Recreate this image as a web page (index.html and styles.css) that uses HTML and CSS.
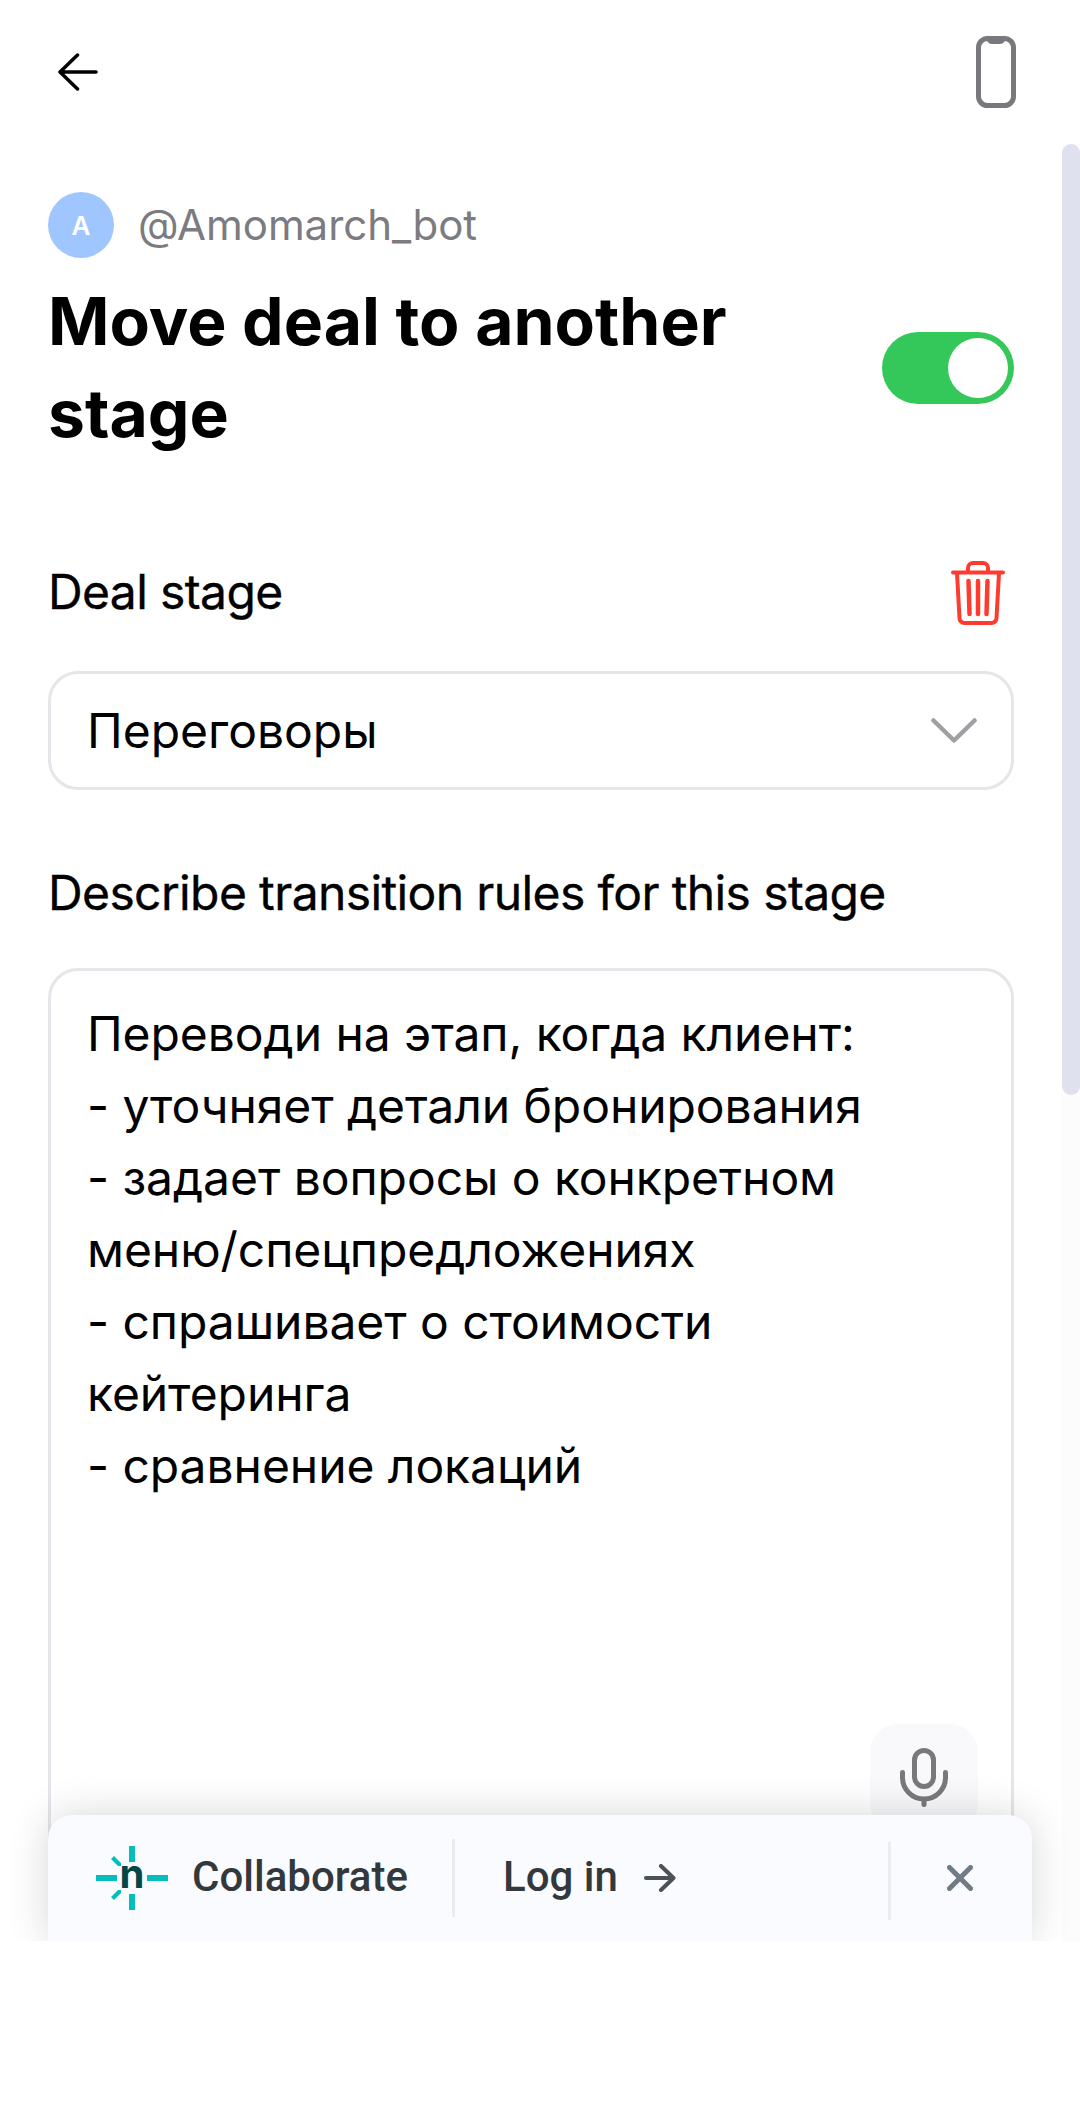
FILE: index.html
```html
<!DOCTYPE html>
<html>
<head>
<meta charset="utf-8">
<title>Move deal to another stage</title>
<link rel="stylesheet" href="styles.css">
</head>
<body>

<div class="screen">

  <div class="scroll-track"><div class="scroll-thumb"></div></div>

  <div class="content">

    <!-- Top bar -->
    <div class="top-bar">
      <svg class="back-icon" width="40" height="38" viewBox="0 0 40 38" fill="none" stroke="#000" stroke-width="3.5" stroke-linecap="round" stroke-linejoin="round">
        <path d="M38 19H3M19.500 2L2 19l17.500 17"/>
      </svg>
      <svg class="phone-icon" width="40" height="72" viewBox="0 0 40 72" fill="none">
        <rect x="2.500" y="2.500" width="35" height="67" rx="9" stroke="#78787d" stroke-width="5"/>
        <path d="M9 3c3 2 3 5 7 5h8c4 0 4-3 7-5z" fill="#78787d"/>
      </svg>
    </div>

    <div class="bot-row">
      <div class="avatar">A</div>
      <span class="bot-name">@Amomarch_bot</span>
    </div>

    <div class="title-row">
      <h1 class="title">Move deal to another stage</h1>
      <div class="toggle"><div class="toggle-knob"></div></div>
    </div>

    <div class="label-row">
      <span class="label">Deal stage</span>
      <svg width="54" height="64" viewBox="0 0 54 64" fill="none" stroke="#ff3b30" stroke-width="4" stroke-linecap="round" stroke-linejoin="round">
        <path d="M2 11.500H52"/>
        <path d="M17 11V7a5 5 0 0 1 5-5h10a5 5 0 0 1 5 5v4"/>
        <path d="M6 12l2.500 45a5 5 0 0 0 5 5h27a5 5 0 0 0 5-5L48 12"/>
        <path d="M17.500 20l1 33M27 20v33M36.500 20l-1 33" stroke-width="4.500"/>
      </svg>
    </div>

    <div class="select">
      <span>Переговоры</span>
      <svg width="46" height="25" viewBox="0 0 46 25" fill="none" stroke="#a0a0a4" stroke-width="4.500" stroke-linecap="round" stroke-linejoin="round">
        <path d="M2.500 2.500L23 22.500 43.500 2.500"/>
      </svg>
    </div>

    <div class="label rules-label">Describe transition rules for this stage</div>

    <div class="rules-box">
      <div class="rules-text">Переводи на этап, когда клиент:
- уточняет детали бронирования
- задает вопросы о конкретном меню/спецпредложениях
- спрашивает о стоимости кейтеринга
- сравнение локаций</div>
      <div class="mic-btn">
        <svg width="48" height="59" viewBox="0 0 48 59" fill="none" stroke="#78787d" stroke-width="5" stroke-linecap="round">
          <rect x="14.500" y="2.500" width="19" height="36" rx="9.500"/>
          <path d="M2.500 24.500v5a21.500 21.500 0 0 0 43 0v-5"/>
          <path d="M24 52v4.500"/>
        </svg>
      </div>
    </div>

  </div>

  <!-- Collaboration bar -->
  <div class="collab-bar">
    <div class="collab-main">
      <svg class="collab-logo" width="72" height="64" viewBox="0 0 72 64">
        <g fill="#05bdba">
          <rect x="0" y="29" width="21" height="6"/>
          <rect x="51" y="29" width="21" height="6"/>
          <rect x="33" y="0" width="6" height="16"/>
          <rect x="33" y="48" width="6" height="16"/>
          <path d="M15 13l3-3 7 7v3h-3zM15 51l3 3 7-7v-3h-3z"/>
        </g>
        <text class="collab-logo-n" x="36" y="42" text-anchor="middle">n</text>
      </svg>
      <span class="collab-text">Collaborate</span>
    </div>
    <div class="collab-login">
      <span class="collab-text">Log in</span>
      <svg width="32" height="28" viewBox="0 0 32 28" fill="none" stroke="#4b5258" stroke-width="4" stroke-linecap="round" stroke-linejoin="round">
        <path d="M2 14h27M17 2l12.500 12L17 26"/>
      </svg>
    </div>
    <div class="collab-close">
      <svg width="26" height="26" viewBox="0 0 26 26" fill="none" stroke="#6f7c85" stroke-width="5" stroke-linecap="round">
        <path d="M2.500 2.500l21 21M23.500 2.500l-21 21"/>
      </svg>
    </div>
  </div>

</div>

</body>
</html>
```

FILE: styles.css
```css
body {
    margin: 0;
    background-color: #fff;
    font-family: Inter, "Noto Sans", sans-serif;
    color: #000;
}

/* The visible app area, the rest of the window stays white */
.screen {
    position: relative;
    height: 1941px;
    overflow: hidden;
    background-color: #fff;
}

.content {
    padding: 0 66px 0 48px;
}

.scroll-track {
    position: absolute;
    top: 144px;
    right: 0;
    width: 18px;
    bottom: 0;
    background-color: #fcfcfd;
}

.scroll-thumb {
    height: 951px;
    border-radius: 9px;
    background-color: #dfe1ee;
}

/* Top bar */
.top-bar {
    display: flex;
    align-items: center;
    justify-content: space-between;
    height: 144px;
}

.back-icon {
    margin-left: 10px;
}

.phone-icon {
    margin-right: -2px;
}

/* Bot name */
.bot-row {
    display: flex;
    align-items: center;
    gap: 24px;
    margin-top: 48px;
}

.avatar {
    display: flex;
    align-items: center;
    justify-content: center;
    width: 66px;
    height: 66px;
    border-radius: 50%;
    background-color: #a0c6ff;
    color: #fff;
    font-size: 26px;
    font-weight: 600;
}

.bot-name {
    padding-bottom: 2px;
    color: #7b7b80;
    font-size: 42px;
    letter-spacing: -0.05px;
}

/* Title */
.title-row {
    display: flex;
    align-items: center;
    justify-content: space-between;
    margin-top: 17px;
}

.title {
    max-width: 780px;
    margin: 0;
    padding-bottom: 2px;
    font-size: 66px;
    font-weight: 700;
    line-height: 92px;
}

.toggle {
    display: flex;
    justify-content: flex-end;
    box-sizing: border-box;
    width: 132px;
    height: 72px;
    padding: 6px;
    border-radius: 36px;
    background-color: #34c759;
}

.toggle-knob {
    width: 60px;
    height: 60px;
    border-radius: 50%;
    background-color: #fff;
}

/* Fields */
.label {
    padding-bottom: 2px;
    font-size: 48px;
    letter-spacing: -0.62px;
    line-height: 60px;
    -webkit-text-stroke: 0.35px #000;
}

.label-row {
    display: flex;
    align-items: center;
    justify-content: space-between;
    margin-top: 100px;
    padding-right: 9px;
}

.select {
    display: flex;
    align-items: center;
    justify-content: space-between;
    box-sizing: border-box;
    height: 119px;
    margin-top: 46px;
    padding: 0 34px 0 36px;
    border: 3px solid #e5e5ea;
    border-radius: 30px;
    font-size: 48px;
}

.rules-label {
    margin-top: 73px;
}

.rules-box {
    position: relative;
    box-sizing: border-box;
    height: 900px;
    margin-top: 43px;
    padding: 27px 36px;
    border: 3px solid #e5e5ea;
    border-radius: 30px;
}

.rules-text {
    font-size: 48px;
    letter-spacing: -0.06px;
    line-height: 72px;
    white-space: pre-line;
}

.mic-btn {
    position: absolute;
    right: 33px;
    bottom: 33px;
    display: flex;
    justify-content: center;
    box-sizing: border-box;
    width: 108px;
    height: 108px;
    padding-top: 24px;
    border-radius: 28px;
    background-color: #f9f9fb;
}

/* Collaboration bar */
.collab-bar {
    position: absolute;
    top: 1815px;
    left: 48px;
    display: flex;
    align-items: center;
    width: 984px;
    height: 126px;
    border-radius: 24px 24px 0 0;
    background-color: #f9fbff;
    box-shadow: 0 0 40px rgba(0,0,0,0.16);
}

.collab-main {
    display: flex;
    align-items: center;
    gap: 24px;
    box-sizing: border-box;
    width: 407px;
    height: 78px;
    padding-left: 48px;
    border-right: 3px solid #ebecf0;
}

.collab-logo-n {
    fill: #014847;
    font-family: Inter, sans-serif;
    font-size: 40px;
    font-weight: 700;
}

.collab-text {
    padding-bottom: 3px;
    color: #32383c;
    font-family: Roboto, sans-serif;
    font-size: 42px;
    font-weight: 500;
}

.collab-login {
    display: flex;
    align-items: center;
    gap: 26px;
    box-sizing: border-box;
    width: 436px;
    height: 78px;
    margin-top: 6px;
    padding: 0 0 6px 48px;
    border-right: 3px solid #ebecf0;
}

.collab-close {
    display: flex;
    justify-content: center;
    flex: 1;
    padding-right: 4px;
}
```
